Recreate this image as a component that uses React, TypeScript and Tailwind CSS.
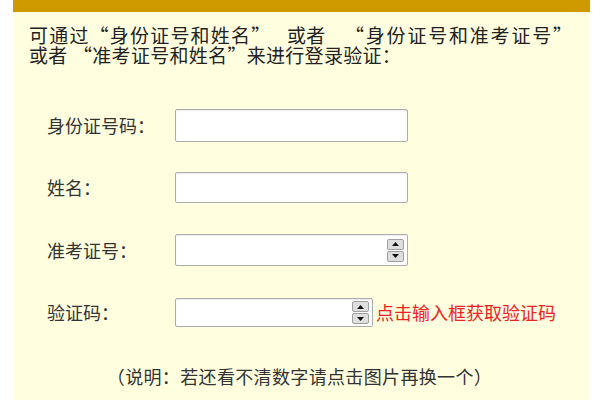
import React from "react";

const font = { fontFamily: '"Noto Sans CJK SC", "Noto Sans", sans-serif' };

function Spinner() {
  return (
    <div className="flex flex-col gap-[1px] mr-[3px]">
      <div className="w-[17px] h-[11px] bg-[#dedede] border border-[#a0a0a0] rounded-[2px] flex items-center justify-center">
        <svg width="7" height="4" viewBox="0 0 7 4"><polygon points="3.5,0 7,4 0,4" fill="#111" /></svg>
      </div>
      <div className="w-[17px] h-[11px] bg-[#dedede] border border-[#a0a0a0] rounded-[2px] flex items-center justify-center">
        <svg width="7" height="4" viewBox="0 0 7 4"><polygon points="0,0 7,0 3.5,4" fill="#111" /></svg>
      </div>
    </div>
  );
}

function Row({ label, h, w, spin, mt, extra }: { label: string; h: string; w: string; spin?: boolean; mt: string; extra?: React.ReactNode }) {
  return (
    <div className={`flex items-center ${mt}`}>
      <div className="w-[162px] shrink-0 pl-[34px] text-[18px] text-[#333] whitespace-nowrap">{label}</div>
      <div className={`${w} ${h} shrink-0 bg-white border border-[#adadad] rounded-[2px] shadow-[inset_0_1px_1px_rgba(0,0,0,0.08)] flex items-center justify-end`}>
        {spin ? <Spinner /> : null}
      </div>
      {extra}
    </div>
  );
}

export default function App() {
  return (
    <div className="w-[600px] h-[400px] bg-white overflow-hidden" style={font}>
      <div className="ml-[13px] w-[577px] h-full bg-[#ffffe0]">
        <div className="h-[12px] bg-[#cf9a00]" />
        <div className="pl-[16px] pt-[13px] text-[19px] leading-[20px] text-[#222] tracking-[0.3px]">
          <div className="flex whitespace-nowrap">
            <span className="w-[258px] shrink-0 tracking-[1.2px]">可通过“身份证号和姓名”</span>
            <span className="w-[58px] shrink-0">或者</span>
            <span className="tracking-[1.8px]">“身份证号和准考证号”</span>
          </div>
          <div className="flex whitespace-nowrap">
            <span className="w-[44px] shrink-0">或者</span>
            <span>“准考证号和姓名”来进行登录验证：</span>
          </div>
        </div>
        <div className="flex flex-col">
          <Row label="身份证号码：" h="h-[33px]" w="w-[233px]" mt="mt-[44px]" />
          <Row label="姓名：" h="h-[31px]" w="w-[233px]" mt="mt-[30px]" />
          <Row label="准考证号：" h="h-[32px]" w="w-[233px]" spin mt="mt-[31px]" />
          <Row
            label="验证码："
            h="h-[29px]"
            w="w-[198px]"
            spin
            mt="mt-[32px]"
            extra={<span className="ml-[3px] text-[18px] text-[#ee2222] whitespace-nowrap">点击输入框获取验证码</span>}
          />
        </div>
        <div className="mt-[36px] text-center text-[18px] text-[#333] tracking-[0.35px] pr-[4px]">（说明：若还看不清数字请点击图片再换一个）</div>
      </div>
    </div>
  );
}
